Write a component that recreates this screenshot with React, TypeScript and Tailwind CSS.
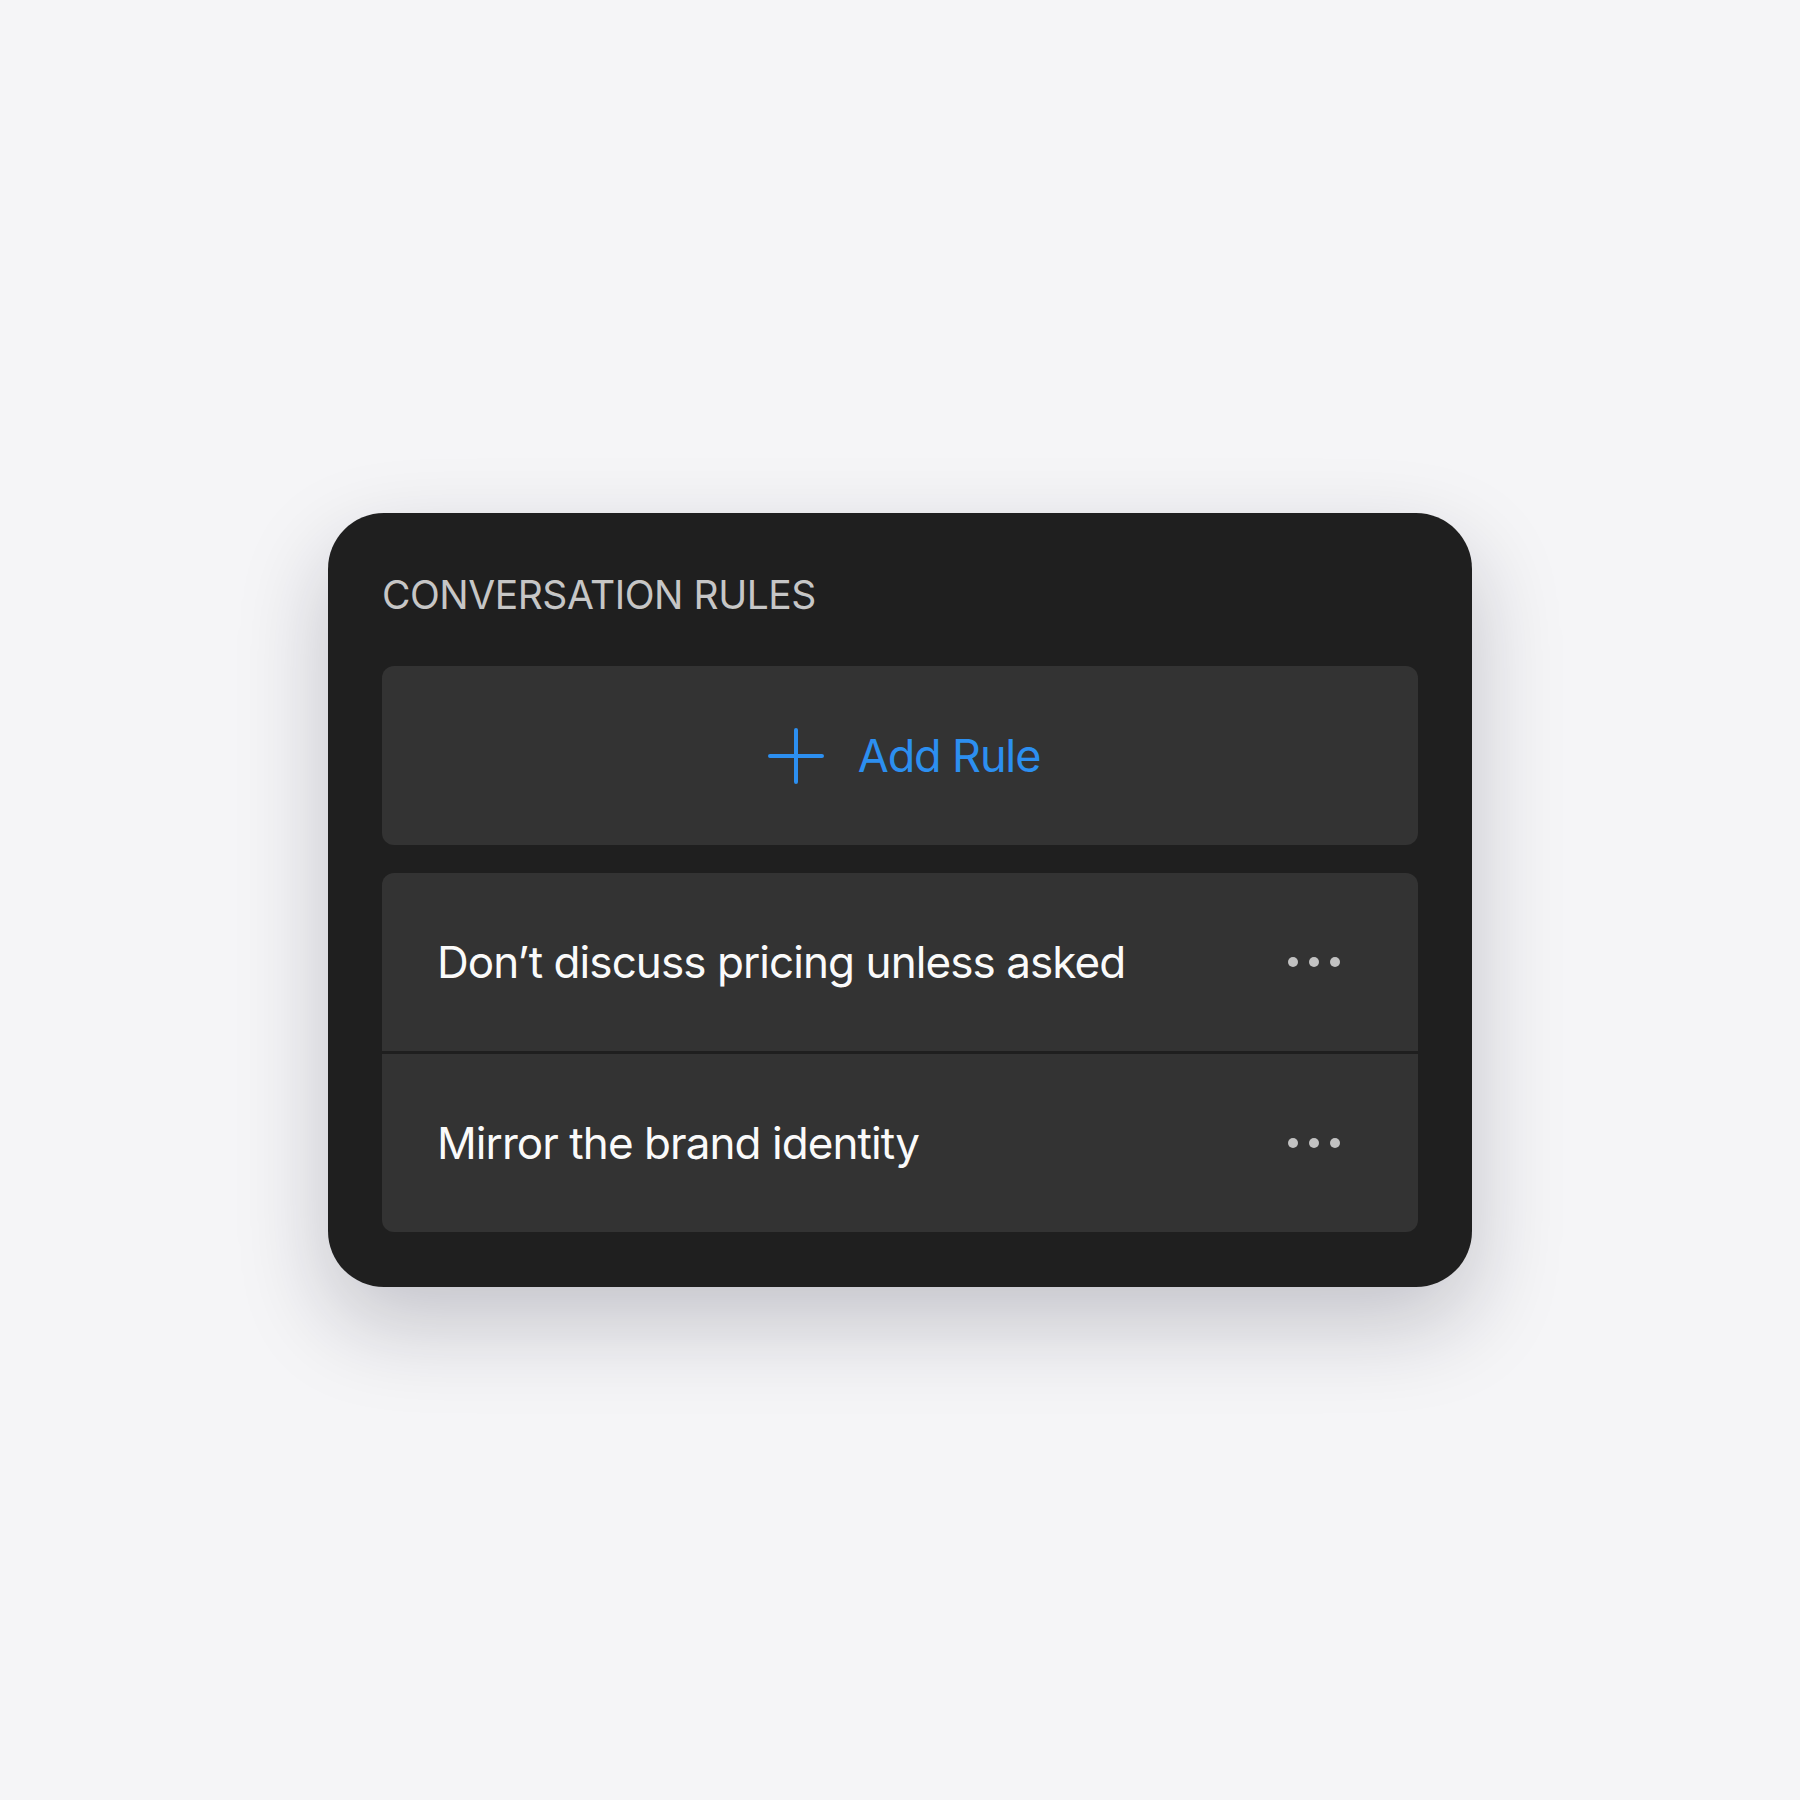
const rules = ["Don’t discuss pricing unless asked", "Mirror the brand identity"];

const PlusIcon = () => (
  <svg width="56" height="56" viewBox="0 0 56 56" fill="none" stroke="#2c8ff0" strokeWidth="4" strokeLinecap="round">
    <path d="M28 2v52M2 28h52" />
  </svg>
);

const MoreDots = () => (
  <div className="flex items-center gap-[11px]">
    <span className="w-[10px] h-[10px] rounded-full bg-[#c2c2c2]" />
    <span className="w-[10px] h-[10px] rounded-full bg-[#c2c2c2]" />
    <span className="w-[10px] h-[10px] rounded-full bg-[#c2c2c2]" />
  </div>
);

const RuleRow = ({ text }: { text: string }) => (
  <div className="h-[178px] bg-[#333333] flex items-center justify-between pl-[55px] pr-[78px]">
    <span className="text-[44px] leading-none text-[#fafafa] tracking-[-0.021em]">{text}</span>
    <MoreDots />
  </div>
);

const App = () => {
  return (
    <div
      className="min-h-screen bg-[#f5f5f7] flex items-center justify-center"
      style={{ fontFamily: "Inter, 'Noto Sans', sans-serif" }}
    >
      <div className="w-[1144px] bg-[#1f1f1f] rounded-[56px] px-[54px] pt-[62px] pb-[55px] shadow-[0_36px_90px_rgba(20,20,40,0.22)]">
        <h2 className="text-[39px] leading-none text-[#c6c6c6] tracking-[-0.012em]">CONVERSATION RULES</h2>
        <button className="mt-[52px] w-full h-[179px] bg-[#333333] rounded-[12px] flex items-center justify-center gap-[34px] pl-[8px]">
          <PlusIcon />
          <span className="text-[45px] leading-none text-[#2c8ff0] tracking-[-0.025em]">Add Rule</span>
        </button>
        <div className="mt-[28px] rounded-[12px] overflow-hidden flex flex-col gap-[3px]">
          {rules.map((r) => (
            <RuleRow key={r} text={r} />
          ))}
        </div>
      </div>
    </div>
  );
};

export default App;
